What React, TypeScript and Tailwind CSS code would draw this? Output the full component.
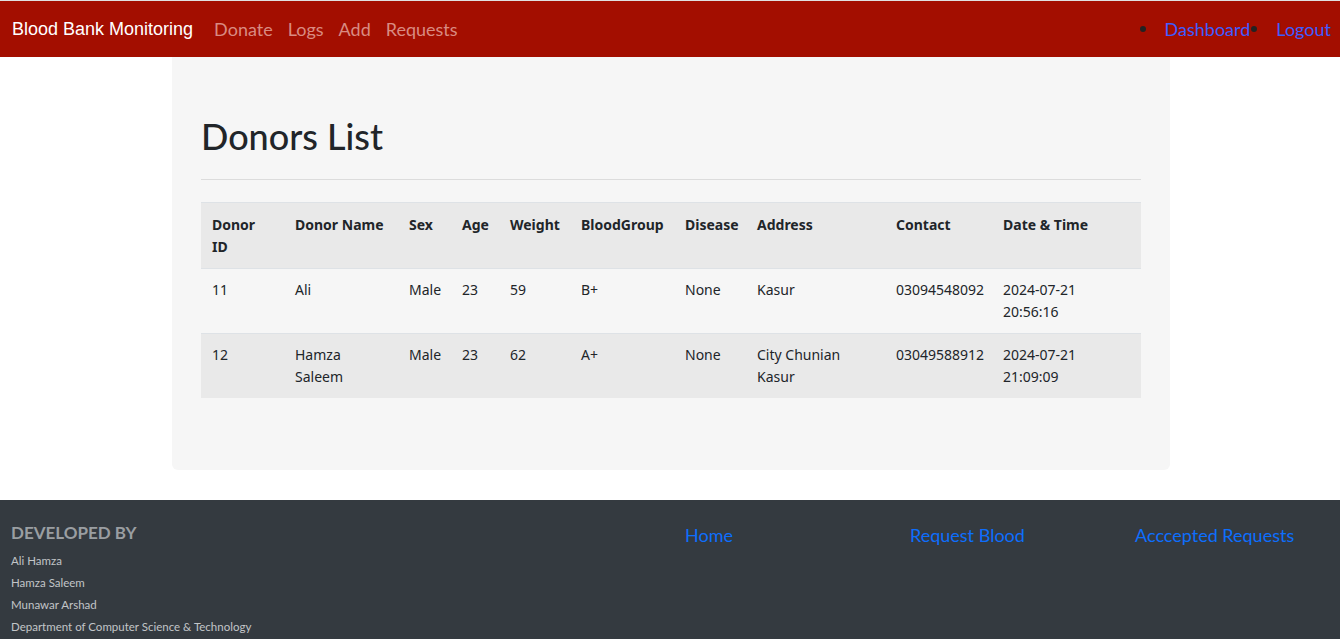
import React from 'react';

type Donor = {
    id: string;
    name: string;
    sex: string;
    age: string;
    weight: string;
    group: string;
    disease: string;
    address: string;
    contact: string;
    date: string;
    time: string;
};

const donors: Donor[] = [
    { id: '11', name: 'Ali', sex: 'Male', age: '23', weight: '59', group: 'B+', disease: 'None', address: 'Kasur', contact: '03094548092', date: '2024-07-21', time: '20:56:16' },
    { id: '12', name: 'Hamza Saleem', sex: 'Male', age: '23', weight: '62', group: 'A+', disease: 'None', address: 'City Chunian Kasur', contact: '03049588912', date: '2024-07-21', time: '21:09:09' },
];

const widths = [83, 114, 53, 48, 71, 104, 72, 139, 107, 149];
const headers = ['Donor ID', 'Donor Name', 'Sex', 'Age', 'Weight', 'BloodGroup', 'Disease', 'Address', 'Contact', 'Date & Time'];

const lato = { fontFamily: 'Lato, "Noto Sans", sans-serif' };
const noto = { fontFamily: '"Noto Sans", "Open Sans", sans-serif' };

const Navbar = () => (
    <nav className="h-[56px] bg-[#a30e00] flex items-center pl-3 pr-[9px]">
        <span className="text-white text-[18px] mr-[21px] font-['Liberation_Sans',Arial,sans-serif]">Blood Bank Monitoring</span>
        <div className="flex gap-[15px] text-[18px] text-[#d98b82]" style={lato}>
            <a>Donate</a>
            <a>Logs</a>
            <a>Add</a>
            <a>Requests</a>
        </div>
        <ul className="ml-auto flex text-[18px] text-[#3d5cff]" style={lato}>
            <li className="flex items-center">
                <span className="w-[6px] h-[6px] rounded-full bg-[#222] mr-[19px]" />
                <a className="mr-[1px]">Dashboard</a>
            </li>
            <li className="flex items-center">
                <span className="w-[6px] h-[6px] rounded-full bg-[#222] mr-[19px]" />
                <a>Logout</a>
            </li>
        </ul>
    </nav>
);

const DonorTable = () => (
    <table className="table-fixed border-collapse w-[940px] text-[14px] leading-[22px] text-[#212529]" style={noto}>
        <colgroup>
            {widths.map((w, i) => <col key={i} style={{ width: w }} />)}
        </colgroup>
        <thead>
            <tr className="bg-[#e9e9e9] border-t border-[#dee2e6]">
                {headers.map(h => (
                    <th key={h} className="text-left align-top font-bold pl-[11px] pr-[12px] pt-[11px] pb-[10px] h-[66px]">{h}</th>
                ))}
            </tr>
        </thead>
        <tbody>
            {donors.map((d, i) => (
                <tr key={d.id} className={`border-t border-[#dee2e6] ${i % 2 ? 'bg-[#e9e9e9]' : 'bg-[#f6f6f6]'}`}>
                    {[d.id, d.name, d.sex, d.age, d.weight, d.group, d.disease, d.address, d.contact].map((v, j) => (
                        <td key={j} className="align-top pl-[11px] pr-[12px] pt-[10px] pb-[10px]">{v}</td>
                    ))}
                    <td className="align-top pl-[11px] pr-[12px] pt-[10px] pb-[10px]">{d.date}<br />{d.time}</td>
                </tr>
            ))}
        </tbody>
    </table>
);

const Footer = () => (
    <footer className="bg-[#343a40] h-[139px] flex pl-[11px] pt-[20px]" style={lato}>
        <div className="w-[659px] shrink-0">
            <h5 className="text-[17px] font-bold text-[#9a9ea2] leading-[24px] mt-[1px] mb-[5px]">DEVELOPED BY</h5>
            <div className="text-[11.5px] leading-[22px] text-[#c2c5c8]">
                <p>Ali Hamza</p>
                <p>Hamza Saleem</p>
                <p>Munawar Arshad</p>
                <p>Department of Computer Science &amp; Technology</p>
            </div>
        </div>
        <div className="flex pt-[2px] text-[18px] text-[#0d6efd]">
            <a className="w-[225px] pl-[15px]">Home</a>
            <a className="w-[225px] pl-[15px]">Request Blood</a>
            <a className="w-[220px] pl-[15px]">Acccepted Requests</a>
        </div>
    </footer>
);

export default function App() {
    return (
        <div className="w-[1340px] min-h-[639px] bg-white" style={lato}>
            <div className="h-px bg-[#e0e0e0]" />
            <Navbar />
            <div className="h-[443px]">
                <div className="ml-[172px] w-[998px] h-[413px] bg-[#f6f6f6] rounded-b-[6px] px-[29px] pt-[55px]">
                    <h1 className="text-[36px] leading-[48px] font-medium text-[#212529]">Donors List</h1>
                    <hr className="mt-[19px] mb-[22px] border-t border-[#dcdcdc]" />
                    <DonorTable />
                </div>
            </div>
            <Footer />
        </div>
    );
}
